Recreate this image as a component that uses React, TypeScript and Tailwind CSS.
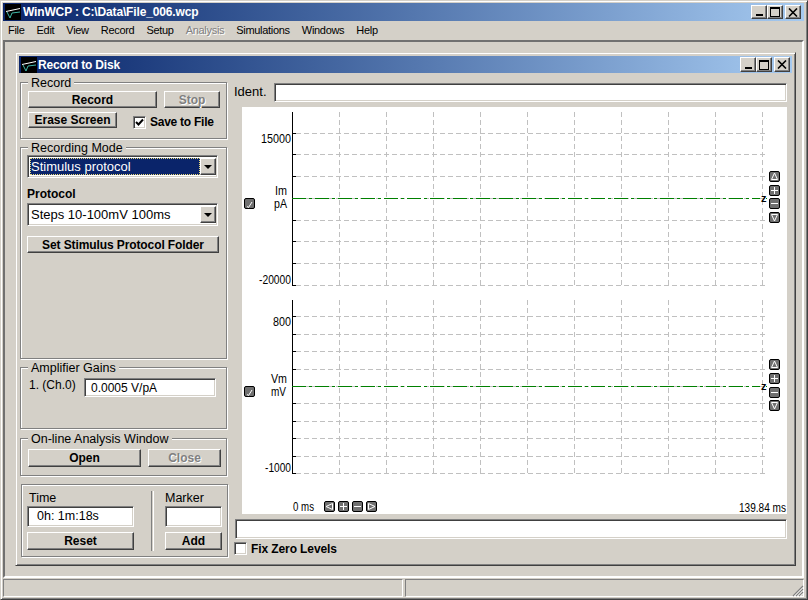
import React from 'react';

const raised =
  'border border-t-white border-l-white border-r-[#404040] border-b-[#404040] shadow-[inset_-1px_-1px_0_#808080] bg-[#d4d0c8]';
const sunken =
  'border border-t-[#808080] border-l-[#808080] border-r-white border-b-white shadow-[inset_1px_1px_0_#404040,inset_-1px_-1px_0_#d4d0c8] bg-white';

const menuItems = ['File', 'Edit', 'View', 'Record', 'Setup', 'Analysis', 'Simulations', 'Windows', 'Help'];
const gridX = [339, 386, 433, 480, 527, 574, 621, 668, 715, 762];

const Logo = () => (
  <svg width="16" height="16" viewBox="0 0 16 16" className="shrink-0">
    <rect width="16" height="16" fill="#000" />
    <path d="M1 7.5L15 4.5" stroke="#fff" strokeWidth="1" />
    <path d="M2 8L5 14L7 9L15 8" stroke="#3fb8a8" strokeWidth="1" fill="none" />
  </svg>
);

const WinButtons = ({ size }: { size: string }) => (
  <div className="flex items-center">
    <button className={`${raised} ${size} flex items-end justify-center pb-[2px]`}>
      <span className="block w-[7px] h-[2px] bg-black" />
    </button>
    <button className={`${raised} ${size} flex items-center justify-center`}>
      <span className="block w-[10px] h-[10px] border border-black border-t-2" />
    </button>
    <button className={`${raised} ${size} ml-[2px] flex items-center justify-center`}>
      <svg width="10" height="9" viewBox="0 0 10 9">
        <path d="M1 0.5L9 8.5M9 0.5L1 8.5" stroke="#000" strokeWidth="1.6" />
      </svg>
    </button>
  </div>
);

const Btn = ({ label, cls, disabled }: { label: string; cls: string; disabled?: boolean }) => (
  <button
    className={`${raised} ${cls} flex items-center justify-center font-bold text-[12px] leading-none ${
      disabled ? 'text-[#808080] [text-shadow:1px_1px_0_#fff]' : 'text-black'
    }`}
  >
    {label}
  </button>
);

const Group = ({ title, cls, children }: { title?: string; cls: string; children: React.ReactNode }) => (
  <div className={`relative border border-[#808080] shadow-[inset_1px_1px_0_#fff,1px_1px_0_#fff] ${cls}`}>
    {title && (
      <span className="absolute left-[7px] -top-[7px] bg-[#d4d0c8] px-[3px] text-[12.5px] leading-[14px]">
        {title}
      </span>
    )}
    {children}
  </div>
);

const Dropdown = ({ value, selected }: { value: string; selected?: boolean }) => (
  <div className={`${sunken} w-[191px] h-[23px] flex items-stretch pt-[2px] pb-[2px] pl-[2px] pr-px text-[13px]`}>
    <div
      className={`flex-1 flex items-center pt-px ${
        selected ? 'bg-[#0a246a] text-white border border-dotted border-[#e8d878]' : 'text-black pl-px'
      }`}
    >
      {value}
    </div>
    <button className={`${raised} w-[16px] flex items-center justify-center`}>
      <span className="block w-0 h-0 border-x-[4px] border-x-transparent border-t-[4px] border-t-black" />
    </button>
  </div>
);

const Check = ({ checked }: { checked?: boolean }) => (
  <div className={`${sunken} w-[13px] h-[13px] flex items-center justify-center shrink-0`}>
    {checked && (
      <svg width="9" height="9" viewBox="0 0 9 9">
        <path d="M1 4L3.5 6.5L8 1.5" stroke="#000" strokeWidth="2" fill="none" />
      </svg>
    )}
  </div>
);

// small scope control button, the glyph is passed as svg children
const ScopeBtn = ({ x, y, children }: { x: number; y: number; children?: React.ReactNode }) => (
  <g transform={`translate(${x} ${y})`}>
    <rect x="0.5" y="0.5" width="10" height="10" rx="1.5" fill="#707070" stroke="#000" />
    <g stroke="#fff" fill="none" shapeRendering="crispEdges">
      {children}
    </g>
  </g>
);

const upGlyph = <path d="M5.5 2L2.5 8.5H8.5Z" shapeRendering="auto" />;
const downGlyph = <path d="M5.5 9L2.5 2.5H8.5Z" shapeRendering="auto" />;
const leftGlyph = <path d="M2 5.5L8.5 2.5V8.5Z" shapeRendering="auto" />;
const rightGlyph = <path d="M9 5.5L2.5 2.5V8.5Z" shapeRendering="auto" />;
const plusGlyph = <path d="M2 5.5H9M5.5 2V9" />;
const minusGlyph = <path d="M2 5.5H9" />;
const slashGlyph = <path d="M3 8.5L4.5 9.5L8 4" shapeRendering="auto" />;

const Label = ({ x, y, w, text }: { x: number; y: number; w: number; text: string }) => (
  <text x={x} y={y} fontSize="13" textLength={w} lengthAdjust="spacingAndGlyphs" fill="#000">
    {text}
  </text>
);

const Plot = ({ top, bottom, ticks, zero }: { top: number; bottom: number; ticks: number[]; zero: number }) => (
  <g shapeRendering="crispEdges">
    {gridX.map((x) => (
      <line key={x} x1={x + 0.5} x2={x + 0.5} y1={top} y2={bottom + 1} stroke="#c0c0c0" strokeDasharray="5 3" />
    ))}
    {ticks.map((y) => (
      <g key={y}>
        <line x1="296" x2="767" y1={y + 0.5} y2={y + 0.5} stroke="#c0c0c0" strokeDasharray="5 3" />
        <line x1="292" x2="296" y1={y + 0.5} y2={y + 0.5} stroke="#000" />
      </g>
    ))}
    <line x1="292.5" x2="292.5" y1={top} y2={bottom + 1} stroke="#000" />
    <line x1="292" x2="760" y1={zero + 0.5} y2={zero + 0.5} stroke="#008000" strokeDasharray="14 3 3 3" />
    <line x1="766" x2="767" y1={zero + 0.5} y2={zero + 0.5} stroke="#008000" />
  </g>
);

export default function App() {
  return (
    <div className="w-[808px] h-[600px] flex flex-col overflow-hidden bg-[#d4d0c8] text-black border border-t-[#d4d0c8] border-l-[#d4d0c8] border-r-[#404040] border-b-[#404040] shadow-[inset_1px_1px_0_#fff,inset_-1px_-1px_0_#808080] pt-[2px] pl-[2px] pr-[3px] pb-[2px] font-['Liberation_Sans',Arial,sans-serif]">
      {/* main title bar */}
      <div className="h-[18px] shrink-0 flex items-center justify-between pr-[3px] pl-[2px] bg-gradient-to-r from-[#0a246a] to-[#a6caf0]">
        <div className="flex items-center gap-[2px]">
          <Logo />
          <span className="text-white font-bold text-[12px] tracking-[-0.15px] leading-none">WinWCP : C:\Data\File_006.wcp</span>
        </div>
        <WinButtons size="w-[16px] h-[14px]" />
      </div>

      {/* menu */}
      <div className="h-[19px] shrink-0 flex items-center gap-[12px] pl-[5px] text-[11px] tracking-[-0.3px] leading-none">
        {menuItems.map((m) => (
          <span key={m} className={m === 'Analysis' ? 'text-[#808080] [text-shadow:1px_1px_0_#fff]' : ''}>
            {m}
          </span>
        ))}
      </div>

      {/* mdi client */}
      <div className="flex-1 min-h-0 flex border-2 border-t-[#707070] border-l-[#707070] border-r-white border-b-white pt-[10px] pl-[10px] pr-[6px] pb-[10px]">
        <div className="flex-1 flex flex-col border border-[#d4d0c8] border-r-[#404040] border-b-[#404040] shadow-[inset_1px_1px_0_#fff,inset_-1px_-1px_0_#808080] p-[3px]">
          <div className="h-[17px] shrink-0 flex items-center justify-between pl-[2px] pr-[2px] bg-gradient-to-r from-[#0a246a] to-[#a6caf0]">
            <div className="flex items-center gap-px">
              <Logo />
              <span className="text-white font-bold text-[12px] tracking-[-0.2px] leading-none">Record to Disk</span>
            </div>
            <WinButtons size="w-[16px] h-[15px]" />
          </div>

          <div className="flex-1 flex">
            {/* left column */}
            <div className="w-[215px] shrink-0 pl-[1px] flex flex-col pt-[9px]">
              <Group title="Record" cls="w-[207px] h-[57px] pt-[8px] pl-[7px]">
                <div className="flex gap-[7px]">
                  <Btn label="Record" cls="w-[129px] h-[17px]" />
                  <Btn label="Stop" cls="w-[56px] h-[17px]" disabled />
                </div>
                <div className="flex items-start mt-[4px]">
                  <Btn label="Erase Screen" cls="w-[89px] h-[16px]" />
                  <div className="ml-[16px] mt-[4px]">
                    <Check checked />
                  </div>
                  <span className="ml-[4px] mt-[3px] font-bold text-[12px] leading-[15px] tracking-[-0.25px]">Save to File</span>
                </div>
              </Group>

              <Group title="Recording Mode" cls="w-[207px] h-[212px] mt-[8px] pt-[7px] pl-[6px]">
                <Dropdown value="Stimulus protocol" selected />
                <div className="mt-[9px] mb-[1px] font-bold text-[12px] leading-[15px]">Protocol</div>
                <Dropdown value="Steps 10-100mV 100ms" />
                <Btn label="Set Stimulus Protocol Folder" cls="w-[192px] h-[17px] mt-[10px] tracking-[-0.1px]" />
              </Group>

              <Group title="Amplifier Gains" cls="w-[207px] h-[62px] mt-[8px] pt-[10px] pl-[8px]">
                <div className="flex items-start text-[12px]">
                  <span className="w-[55px] leading-[15px]">1. (Ch.0)</span>
                  <div className={`${sunken} w-[132px] h-[19px] flex items-center pl-[6px]`}>0.0005 V/pA</div>
                </div>
              </Group>

              <Group title="On-line Analysis Window" cls="w-[207px] h-[38px] mt-[9px] pt-[10px] pl-[7px]">
                <div className="flex gap-[7px]">
                  <Btn label="Open" cls="w-[113px] h-[18px]" />
                  <Btn label="Close" cls="w-[73px] h-[18px]" disabled />
                </div>
              </Group>

              <Group cls="w-[207px] h-[73px] mt-[8px] ml-px pl-[5px] pt-[6px] flex">
                <div className="w-[107px]">
                  <div className="text-[12.5px] leading-[15px] pl-[2px]">Time</div>
                  <div className={`${sunken} h-[21px] flex items-center pl-[9px] text-[12.5px]`}>0h: 1m:18s</div>
                  <Btn label="Reset" cls="w-[107px] h-[18px] mt-[5px]" />
                </div>
                <div className="w-[2px] ml-[17px] mb-[5px] border-l border-[#808080] shadow-[1px_0_0_#fff]" />
                <div className="w-[57px] ml-[12px]">
                  <div className="text-[12.5px] leading-[15px]">Marker</div>
                  <div className={`${sunken} h-[21px]`} />
                  <Btn label="Add" cls="w-[57px] h-[18px] mt-[5px]" />
                </div>
              </Group>
            </div>

            {/* right column */}
            <div className="flex-1 flex flex-col pt-[10px]">
              <div className="flex items-start h-[19px]">
                <span className="w-[40px] text-[13px] leading-[18px]">Ident.</span>
                <div className={`${sunken} w-[513px] h-[19px]`} />
              </div>

              <svg
                width="545"
                height="407"
                viewBox="242 107 545 407"
                className="mt-[5px] ml-[8px] bg-white block overflow-hidden"
                fontFamily="'Liberation Sans', Arial, sans-serif"
              >
                <Plot top={112} bottom={285} ticks={[133, 154, 176, 198, 220, 241, 263, 285]} zero={198} />
                <Plot top={300} bottom={473} ticks={[316, 334, 351, 369, 386, 403, 421, 438, 456, 473]} zero={386} />

                <Label x={261} y={143} w={30} text="15000" />
                <Label x={259} y={284} w={32} text="-20000" />
                <Label x={275} y={195} w={12} text="Im" />
                <Label x={274} y={208} w={13} text="pA" />
                <Label x={273} y={326} w={18} text="800" />
                <Label x={265} y={472} w={26} text="-1000" />
                <Label x={271} y={383} w={16} text="Vm" />
                <Label x={271} y={396} w={15} text="mV" />
                <Label x={293} y={511} w={21} text="0 ms" />
                <Label x={739} y={512} w={47} text="139.84 ms" />
                <text x={761} y={202} fontSize="11" fontWeight="bold" fill="#000">z</text>
                <text x={761} y={390} fontSize="11" fontWeight="bold" fill="#000">z</text>

                <ScopeBtn x={244} y={198}>{slashGlyph}</ScopeBtn>
                <ScopeBtn x={244} y={386}>{slashGlyph}</ScopeBtn>

                <ScopeBtn x={769} y={171}>{upGlyph}</ScopeBtn>
                <ScopeBtn x={769} y={185}>{plusGlyph}</ScopeBtn>
                <ScopeBtn x={769} y={198}>{minusGlyph}</ScopeBtn>
                <ScopeBtn x={769} y={212}>{downGlyph}</ScopeBtn>

                <ScopeBtn x={769} y={359}>{upGlyph}</ScopeBtn>
                <ScopeBtn x={769} y={373}>{plusGlyph}</ScopeBtn>
                <ScopeBtn x={769} y={387}>{minusGlyph}</ScopeBtn>
                <ScopeBtn x={769} y={400}>{downGlyph}</ScopeBtn>

                <ScopeBtn x={324} y={501}>{leftGlyph}</ScopeBtn>
                <ScopeBtn x={338} y={501}>{plusGlyph}</ScopeBtn>
                <ScopeBtn x={352} y={501}>{minusGlyph}</ScopeBtn>
                <ScopeBtn x={366} y={501}>{rightGlyph}</ScopeBtn>
              </svg>

              <div className={`${sunken} w-[552px] h-[20px] mt-[5px] ml-px`} />
              <div className="flex items-center mt-[2px] h-[14px]">
                <Check />
                <span className="ml-[4px] mt-px font-bold text-[12px] tracking-[-0.1px]">Fix Zero Levels</span>
              </div>
            </div>
          </div>
        </div>
      </div>

      {/* status bar */}
      <div className="h-[18px] shrink-0 mt-[1px] flex gap-[2px] relative">
        <div className="w-[400px] border border-t-[#808080] border-l-[#808080] border-r-white border-b-white" />
        <div className="flex-1 border border-t-[#808080] border-l-[#808080] border-r-white border-b-white" />
        <svg width="12" height="12" viewBox="0 0 12 12" className="absolute right-0 bottom-0">
          <path d="M11 1L1 11M11 4L4 11M11 7L7 11" stroke="#808080" strokeWidth="1.2" />
          <path d="M11 2.5L2.5 11M11 5.5L5.5 11M11 8.5L8.5 11" stroke="#fff" strokeWidth="0.8" />
        </svg>
      </div>
    </div>
  );
}
